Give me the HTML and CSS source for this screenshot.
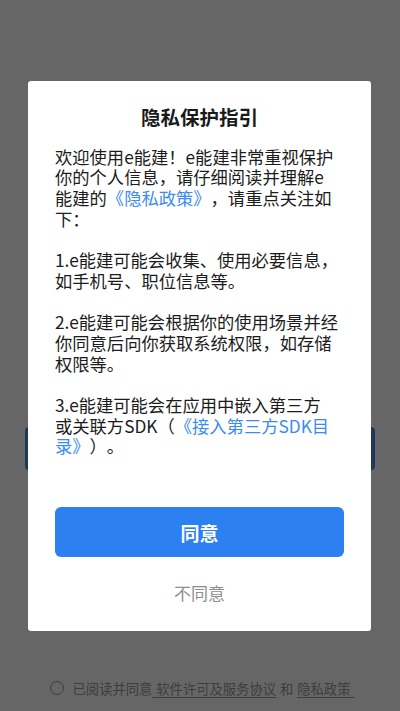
FILE: index.html
```html
<!DOCTYPE html>
<html lang="zh-CN">
<head>
<meta charset="utf-8">
<title>隐私保护指引</title>
<link rel="stylesheet" href="styles.css">
</head>
<body>
<div class="page">
  <div class="page-btn"></div>
  <div class="agree-row">
    <span class="radio"></span>
    <span class="agree-text">已阅读并同意<u>&nbsp;软件许可及服务协议</u> 和 <u>隐私政策&nbsp;</u></span>
  </div>
</div>
<div class="overlay">
  <div class="dialog">
    <h1 class="title">隐私保护指引</h1>
    <div class="body">
      <p>欢迎使用e能建！e能建非常重视保护<br>你的个人信息，请仔细阅读并理解e<br>能建的<span class="link">《隐私政策》</span>，请重点关注如<br>下：</p>
      <p>1.e能建可能会收集、使用必要信息，<br>如手机号、职位信息等。</p>
      <p>2.e能建可能会根据你的使用场景并经<br>你同意后向你获取系统权限，如存储<br>权限等。</p>
      <p>3.e能建可能会在应用中嵌入第三方<br>或关联方SDK（<span class="link">《接入第三方SDK目<br>录》</span>）。</p>
    </div>
    <button class="btn-agree">同意</button>
    <div class="btn-disagree">不同意</div>
  </div>
</div>
</body>
</html>
```
FILE: styles.css
```css
* { box-sizing: border-box; }
html, body {
  margin: 0;
  padding: 0;
  height: 100%;
}
body {
  font-family: "Noto Sans CJK SC", "Noto Sans", sans-serif;
  background: #fff;
  text-spacing-trim: space-all;
}
.page {
  height: 100vh;
  display: flex;
  flex-direction: column;
  padding: 0 25px 13px;
}
.page-btn {
  margin-top: 427px;
  height: 43px;
  background: #4a8fe0;
  border-radius: 4px;
}
.agree-row {
  margin-top: auto;
  display: flex;
  align-items: center;
  justify-content: center;
  gap: 9px;
  height: 20px;
  padding-left: 4px;
}
.radio {
  width: 14px;
  height: 14px;
  border: 1.5px solid #999;
  border-radius: 50%;
}
.agree-text {
  font-size: 13.3px;
  color: #999;
  white-space: nowrap;
  word-spacing: 1px;
}
.agree-text u {
  text-decoration: underline;
  text-underline-offset: 3px;
}
.overlay {
  position: fixed;
  inset: 0;
  background: rgba(0, 0, 0, 0.6);
  display: flex;
  align-items: center;
  justify-content: center;
}
.dialog {
  width: 343px;
  height: 550px;
  margin-left: -1px;
  background: #fff;
  border-radius: 3px;
  padding: 24px 27px 0;
  display: flex;
  flex-direction: column;
}
.title {
  margin: 0;
  font-size: 19.5px;
  line-height: 24px;
  font-weight: 700;
  text-align: center;
  color: #1a1a1a;
}
.body {
  margin-top: 18px;
  font-size: 17.3px;
  line-height: 20.7px;
  color: #1c1c1c;
  white-space: nowrap;
}
.body p {
  margin: 0 0 20.7px;
}
.body p:last-child {
  margin-bottom: 0;
}
.link {
  color: #3b8cf0;
}
.btn-agree {
  margin-top: 50px;
  height: 50px;
  width: 100%;
  border: none;
  border-radius: 6px;
  background: #2d80ef;
  color: #fff;
  font-family: inherit;
  font-size: 19px;
  font-weight: 700;
  padding: 0;
}
.btn-disagree {
  margin-top: 24px;
  line-height: 24px;
  text-align: center;
  font-size: 17px;
  color: #8e8e8e;
}
```
